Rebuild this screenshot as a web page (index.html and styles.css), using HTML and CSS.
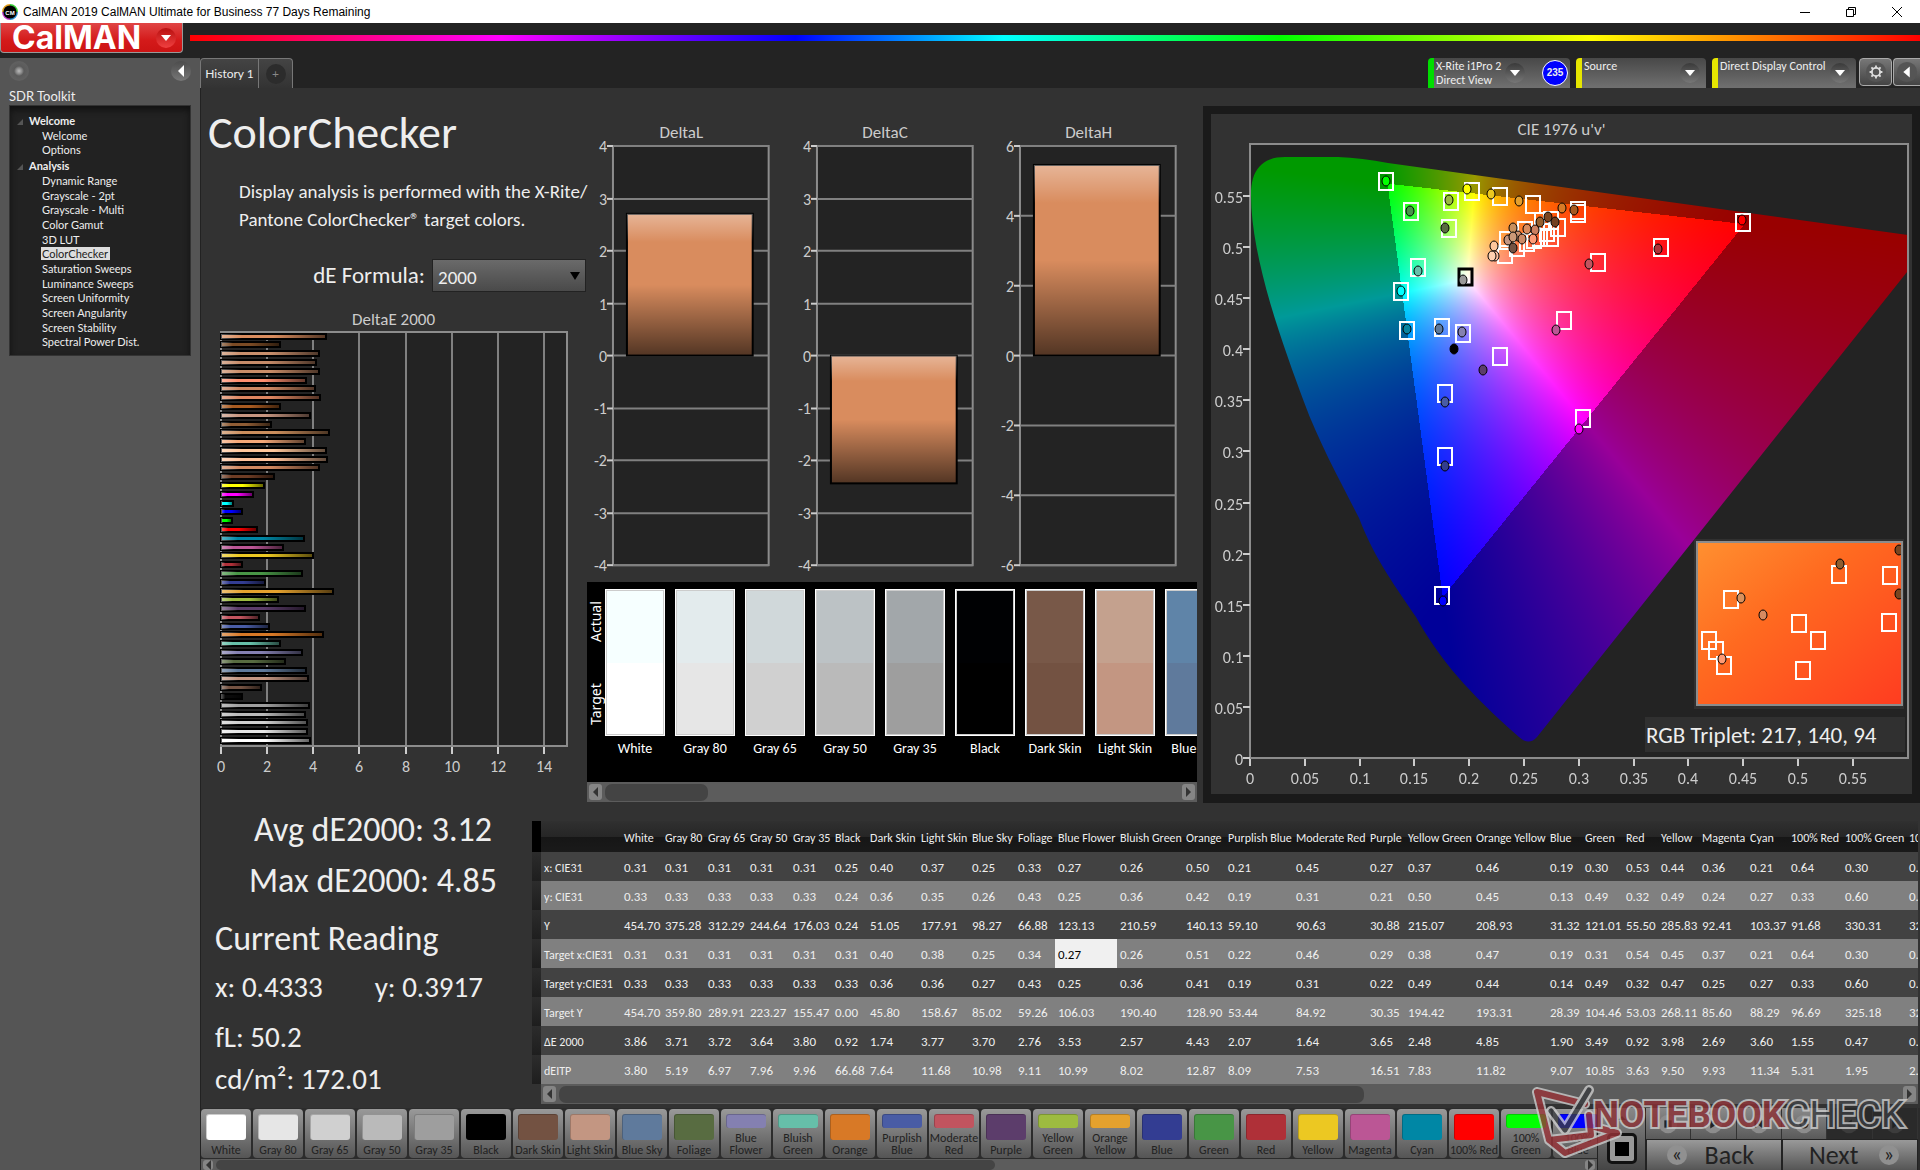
FILE: index.html
```html
<!DOCTYPE html>
<html lang="en">
<head>
<meta charset="utf-8">
<title>CalMAN 2019 CalMAN Ultimate for Business</title>
<link rel="stylesheet" href="styles.css">
</head>
<body>
<div class="titlebar">
  <svg class="app-icon" viewBox="0 0 16 16" aria-hidden="true">
    <path d="M8 1A7 7 0 0 1 15 8" stroke="#3ad03a"/><path d="M15 8A7 7 0 0 1 8 15" stroke="#2a8fd0"/><path d="M8 15A7 7 0 0 1 1 8" stroke="#c03ac8"/><path d="M1 8A7 7 0 0 1 8 1" stroke="#e0a020"/>
    <circle cx="8" cy="8" r="6.6" fill="#000"/><text x="8" y="11" text-anchor="middle">CM</text>
  </svg>
  <span class="title-text">CalMAN 2019 CalMAN Ultimate for Business 77 Days Remaining</span>
  <div class="window-buttons">
    <button type="button" aria-label="Minimize"><svg viewBox="0 0 12 12"><path d="M1 6.500H11"/></svg></button>
    <button type="button" aria-label="Restore"><svg viewBox="0 0 12 12"><path d="M1.500 3.500H8.500V10.500H1.500ZM3.500 3.500V1.500H10.500V8.500H8.500"/></svg></button>
    <button type="button" aria-label="Close"><svg viewBox="0 0 12 12"><path d="M1 1L11 11M11 1L1 11"/></svg></button>
  </div>
</div>

<header class="header">
  <button class="logo" type="button"><span>CalMAN</span><i class="round"><i class="arrow-down"></i></i></button>
  <div class="rainbow"></div>
</header>

<div class="workspace">
  <aside class="sidebar">
    <div class="sidebar-top"><button type="button" class="knob" aria-label="Pin"></button><button type="button" class="knob back" aria-label="Collapse"></button></div>
    <h2>SDR Toolkit</h2>
    <nav class="tree">
      <h3>Welcome</h3>
      <ul><li><a href="#">Welcome</a></li><li><a href="#">Options</a></li></ul>
      <h3>Analysis</h3>
      <ul>
        <li><a href="#">Dynamic Range</a></li><li><a href="#">Grayscale - 2pt</a></li><li><a href="#">Grayscale - Multi</a></li>
        <li><a href="#">Color Gamut</a></li><li><a href="#">3D LUT</a></li><li><a href="#" class="current">ColorChecker</a></li>
        <li><a href="#">Saturation Sweeps</a></li><li><a href="#">Luminance Sweeps</a></li><li><a href="#">Screen Uniformity</a></li>
        <li><a href="#">Screen Angularity</a></li><li><a href="#">Screen Stability</a></li><li><a href="#">Spectral Power Dist.</a></li>
      </ul>
    </nav>
  </aside>

  <div class="content">
    <div class="tabbar">
      <div class="tabs"><button type="button" class="tab">History 1</button><button type="button" class="tab add" aria-label="New tab"><span>+</span></button></div>
      <div class="devices">
        <button type="button" class="device meter"><span>X-Rite i1Pro 2<br>Direct View</span><i class="round"><i class="arrow-down"></i></i><b>235</b></button>
        <button type="button" class="device source"><span>Source</span><i class="round"><i class="arrow-down"></i></i></button>
        <button type="button" class="device display"><span>Direct Display Control</span><i class="round"><i class="arrow-down"></i></i></button>
        <button type="button" class="square" aria-label="Settings"><svg viewBox="0 0 24 24"><circle class="disc" cx="12" cy="12" r="11"/><circle cx="12" cy="12" r="4.500"/><path d="M12 5V8M12 16V19M5 12H8M16 12H19M7 7L9 9M15 15L17 17M17 7L15 9M7 17L9 15"/></svg></button>
        <button type="button" class="square last" aria-label="Hide panel"><svg viewBox="0 0 24 24"><circle class="disc" cx="12" cy="12" r="11"/><path class="solid" d="M15 6V18L8 12Z"/></svg></button>
      </div>
    </div>

    <main class="main">
      <div class="upper">
        <section class="intro">
          <h1>ColorChecker</h1>
          <p>Display analysis is performed with the X-Rite/<br>Pantone ColorChecker® target colors.</p>
          <div class="formula"><label for="formula">dE Formula:</label><select id="formula"><option>2000</option></select></div>
          <h2 class="chart-title">DeltaE 2000</h2>
          <svg id="deltae" class="chart" viewBox="200 328 387 454"></svg>
        </section>

        <section class="middle">
          <div class="deltas">
            <div><h2 class="chart-title">DeltaL</h2><svg class="chart delta" data-max="4" data-step="1" data-value="2.700" viewBox="0 138 177 436"></svg></div>
            <div><h2 class="chart-title">DeltaC</h2><svg class="chart delta" data-max="4" data-step="1" data-value="-2.430" viewBox="0 138 177 436"></svg></div>
            <div><h2 class="chart-title">DeltaH</h2><svg class="chart delta" data-max="6" data-step="2" data-value="5.450" viewBox="0 138 177 436"></svg></div>
          </div>
          <div class="compare">
            <div class="compare-axis"><span>Actual</span><span>Target</span></div>
            <div class="pairs" id="pairs"></div>
          </div>
          <div class="scroll"><button type="button" class="left" aria-label="Scroll left"></button><div class="track"><div class="thumb short"></div></div><button type="button" class="right" aria-label="Scroll right"></button></div>
        </section>

        <section class="cie">
          <h2 class="chart-title">CIE 1976 u'v'</h2>
          <div class="cie-plot">
            <canvas id="gamut" width="701" height="650"></canvas>
            <svg id="cie" class="chart" viewBox="1211 140 701 650"></svg>
          </div>
        </section>
      </div>

      <div class="lower">
        <section class="readings">
          <p class="stat">Avg dE2000: 3.12</p>
          <p class="stat">Max dE2000: 4.85</p>
          <h2>Current Reading</h2>
          <p class="pair"><span>x: 0.4333</span><span>y: 0.3917</span></p>
          <p class="fl">fL: 50.2</p>
          <p class="cd">cd/m²: 172.01</p>
        </section>
        <section class="results">
          <div class="table-wrap"><table id="table"></table></div>
          <div class="scroll under"><button type="button" class="left" aria-label="Scroll left"></button><div class="track"><div class="thumb long"></div></div><button type="button" class="right" aria-label="Scroll right"></button></div>
        </section>
      </div>
    </main>

    <footer class="footer">
      <div class="patches">
        <div class="patch-row" id="patches"></div>
        <div class="scroll thin"><button type="button" class="left" aria-label="Scroll left"></button><div class="track"><div class="thumb patch-thumb"></div></div><button type="button" class="right" aria-label="Scroll right"></button></div>
      </div>
      <div class="window-toggle"><i class="arrow-up"></i><button type="button" aria-label="Pattern window"><i></i></button></div>
      <div class="controls">
        <div class="transport">
          <button type="button" aria-label="Stop"><svg viewBox="0 0 24 24"><circle cx="12" cy="12" r="10"/><path d="M8 8H16V16H8Z"/></svg></button>
          <button type="button" aria-label="Play"><svg viewBox="0 0 24 24"><circle cx="12" cy="12" r="10"/><path d="M9 7L17 12L9 17Z"/></svg></button>
          <button type="button" aria-label="Read series"><svg viewBox="0 0 24 24"><circle cx="12" cy="12" r="10"/><path d="M7 8H9V16H7ZM10 12L15 8V16ZM15 8H17V16H15Z"/></svg></button>
          <button type="button" aria-label="Repeat"><svg viewBox="0 0 24 24"><circle cx="12" cy="12" r="10"/><path d="M12 7A5 5 0 1 0 17 12H15A3 3 0 1 1 12 9V11L16 8L12 5Z"/></svg></button>
          <button type="button" aria-label="Previous" disabled><svg viewBox="0 0 24 24"><circle cx="12" cy="12" r="10"/><path d="M15 7L8 12L15 17Z"/></svg></button>
          <button type="button" aria-label="Skip" disabled><svg viewBox="0 0 24 24"><circle cx="12" cy="12" r="10"/><path d="M9 7L16 12L9 17Z"/></svg></button>
        </div>
        <div class="steps"><button type="button"><i>«</i><span>Back</span></button><button type="button"><span>Next</span><i>»</i></button></div>
      </div>
      <svg class="watermark" viewBox="0 0 390 78" role="img" aria-label="Notebookcheck">
        <g fill="none" stroke-linejoin="round" stroke-linecap="round">
          <path class="halo" d="M8 7L56 19M8 7L20 55L62 50L60 30M20 55L36 68L88 48L66 42"/>
          <path class="brand" d="M8 7L56 19M8 7L20 55L62 50L60 30M20 55L36 68L88 48L66 42"/>
          <path class="halo" d="M22 26L36 45L60 5"/><path class="tick" d="M22 26L36 45L60 5"/>
        </g>
        <text x="64" y="42"><tspan class="w-red">NOTEBOOK</tspan><tspan class="w-grey">CHECK</tspan></text>
      </svg>
    </footer>
  </div>
</div>
<script src="app.js"></script>
</body>
</html>
```
FILE: styles.css
```css
:root {
  --ui: Carlito, "Liberation Sans Narrow", "Roboto Condensed", Lato, sans-serif;
  --panel: #323232;
  --plot: #232323;
}
* { box-sizing: border-box; }
body { margin: 0; min-height: 100vh; background: #232323; color: #eee; font-family: var(--ui); font-size: 12px; display: flex; flex-direction: column; overflow-x: hidden; }
h1, h2, h3, p, ul { margin: 0; padding: 0; font-weight: 400; }
ul { list-style: none; }
button, select { font-family: inherit; color: inherit; border: 0; padding: 0; margin: 0; background: none; }
i { font-style: normal; }

.titlebar { height: 23px; background: #fff; color: #000; display: flex; align-items: center; padding-left: 2px; gap: 5px; }
.app-icon { width: 16px; height: 16px; fill: none; stroke-width: 2; }
.app-icon text { fill: #fff; font: bold 6px "Liberation Sans", sans-serif; }
.title-text { flex: 1; font: 12px "Liberation Sans", sans-serif; }
.window-buttons { display: flex; }
.window-buttons button { width: 46px; height: 20px; display: grid; place-items: center; }
.window-buttons svg { width: 12px; height: 12px; fill: none; stroke: #000; }

.header { height: 35px; display: flex; align-items: flex-start; gap: 7px; }
.logo { width: 183px; height: 30px; padding: 0 6px 0 11px; display: flex; align-items: center; justify-content: space-between; background: linear-gradient(#e04545, #d41a1a 60%, #cc1414); border: 1px solid #999; border-top: 0; border-radius: 0 0 4px 4px; color: #fff; font: bold 32px/28px Inter, sans-serif; }
.round { width: 20px; height: 20px; border-radius: 50%; display: grid; place-items: center; background: linear-gradient(#3a3a3a, #777); }
.logo .round { background: linear-gradient(#b81010, #f04040); }
.arrow-down { border: 5px solid transparent; border-top: 6px solid #fff; border-bottom: 0; }
.rainbow { flex: 1; height: 6px; margin-top: 12px; background: linear-gradient(90deg, #f00, #f0f 18%, #00f 35%, #0ff 47%, #0f0 63%, #ff0 81%, #f00); }

.workspace { flex: 1; display: flex; }
.sidebar { width: 200px; background: #555; padding: 3px 9px; }
.sidebar-top { display: flex; justify-content: space-between; }
.knob { width: 20px; height: 20px; border-radius: 50%; background: radial-gradient(circle, #bbb 0, #888 3px, #5a5a5a 5px, #606060 9px); }
.knob.back { background: linear-gradient(#4c4c4c, #777); display: grid; place-items: center; }
.knob.back::after { content: ""; border: 6px solid transparent; border-right-color: #fff; border-left: 0; }
.sidebar h2 { font: 13px/16px Lato, sans-serif; margin-top: 7px; }
.tree { margin-top: 1px; height: 251px; background: #222; border: 1px solid #333; box-shadow: inset 0 4px 6px #111; padding: 6px 0 0 19px; font: 11px/15px Lato, sans-serif; }
.tree h3 { position: relative; font-size: 11px; font-weight: 700; line-height: 15px; margin: 1px 0; }
.tree h3::before { content: ""; position: absolute; left: -12px; top: 6px; border: 3px solid transparent; border-right-color: #555; border-bottom-color: #555; }
.tree ul { display: grid; grid-auto-rows: 1fr; padding-left: 12px; height: 28px; }
.tree h3 + ul:last-child { height: 176px; }
.tree li { line-height: 14px; }
.tree a { color: inherit; text-decoration: none; padding: 0 2px 0 1px; }
.tree .current { background: #ddd; color: #222; }

.content { flex: 1; min-width: 0; display: flex; flex-direction: column; }
.tabbar { height: 30px; display: flex; justify-content: space-between; background: #232323; }
.tabs { display: flex; border: 1px solid #777; border-bottom: 0; border-radius: 4px 4px 0 0; background: linear-gradient(#444, #333); }
.tab { width: 57px; font: 12px Lato, sans-serif; }
.tab.add { width: 34px; border-left: 1px solid #777; }
.tab.add span { display: inline-block; width: 20px; line-height: 20px; border-radius: 50%; background: #2c2c2c; color: #888; }
.devices { display: flex; align-items: flex-start; }
.device { position: relative; height: 30px; display: flex; align-items: center; border-radius: 4px 4px 0 0; background: linear-gradient(#484848, #707070); border-left: 6px solid #e6e600; text-align: left; padding-right: 6px; margin-right: 6px; }
.device > span { flex: 1; align-self: flex-start; padding: 1px 0 0 2px; font: 12px/14px var(--ui); white-space: nowrap; }
.meter { width: 142px; border-left-color: #0d0; padding-right: 2px; }
.meter b { width: 26px; height: 26px; border-radius: 50%; background: #00f; border: 1px solid #fff; margin-left: 17px; font: bold 10px/24px "Liberation Sans", sans-serif; text-align: center; }
.source { width: 130px; }
.display { width: 144px; margin-right: 3px; }
.square { width: 33px; height: 28px; margin-right: 1px; border: 1px solid #aaa; border-radius: 4px; background: linear-gradient(#777, #444); display: grid; place-items: center; }
.square.last { width: 27px; margin: 0; border-right: 0; border-radius: 4px 0 0 4px; }
.square svg { width: 22px; height: 22px; fill: none; stroke: #ddd; stroke-width: 2; }
.square .disc { fill: #555; stroke: none; }
.square .solid { fill: #fff; stroke: none; }

.main { flex: 1; background: var(--panel); border-left: 1px solid #222; }
.upper { display: grid; grid-template-columns: minmax(0, 387fr) minmax(0, 616fr) minmax(0, 717fr); height: 716px; margin-left: -1px; }
.chart { display: block; width: 100%; overflow: visible; }
.chart-title { font-size: 17px; line-height: 20px; text-align: center; color: #ccc; }
.chart text { font-size: 16px; fill: #ccc; }
.frame { fill: var(--plot); stroke: #8c8c8c; stroke-width: 2; }
.grid { stroke: #808080; stroke-width: 2; }
.tickline { stroke: #ccc; stroke-width: 2; }
.mid { text-anchor: middle; }
.end { text-anchor: end; }
.outline { stroke: #000; stroke-width: 2; }

.intro h1 { font-size: 46px; line-height: 48px; padding: 20px 0 0 8px; white-space: nowrap; }
.intro p { font-size: 19px; line-height: 28px; margin: 22px 0 0 39px; white-space: nowrap; }
.intro .chart-title { line-height: 16px; }
.formula { position: relative; display: flex; justify-content: flex-end; align-items: center; gap: 7px; margin: 25px 1px 20px 0; height: 33px; }
.formula label { font-size: 23px; line-height: 33px; }
.formula select { appearance: none; width: 154px; height: 33px; padding: 4px 4px 0 5px; font-size: 19px; border: 1px solid #222; background: linear-gradient(#6a6a6a, #4a4a4a); }
.formula::after { content: ""; position: absolute; right: 6px; top: 13px; border: 5px solid transparent; border-top: 8px solid #000; border-bottom: 0; }

.middle { padding: 35px 6px 0 0; }
.deltas { display: grid; grid-template-columns: repeat(3, minmax(0, 1fr)); gap: 27px; padding: 0 20px 0 6px; }
.deltas .chart { margin-top: -4px; }
.compare { height: 200px; margin-top: 8px; background: #000; display: flex; overflow: hidden; color: #fff; }
.compare-axis { width: 17px; flex: none; display: flex; flex-direction: column; padding: 10px 0 0; }
.compare-axis span { height: 60px; margin-bottom: 22px; writing-mode: vertical-rl; transform: rotate(180deg); text-align: center; font: 14px/17px "Noto Sans", sans-serif; }
.pairs { display: flex; gap: 10px; padding: 7px 0 0 1px; }
.pairs div { width: 60px; text-align: center; font-size: 14px; line-height: 26px; white-space: nowrap; }
.pairs i { display: block; height: 147px; border: 2px solid #ccc; outline: 1px solid #fff; outline-offset: -1px; }
.scroll { height: 20px; display: flex; align-items: center; background: #5c5c5c; padding: 0 2px; gap: 3px; }
.scroll button { width: 13px; height: 16px; border-radius: 3px; background: #858585; display: grid; place-items: center; }
.scroll button::after { content: ""; border: 5px solid transparent; }
.scroll .left::after { border-right-color: #333; border-left: 0; }
.scroll .right::after { border-left-color: #333; border-right: 0; }
.track { flex: 1; height: 17px; }
.thumb { height: 100%; border-radius: 7px; background: #444; }
.short { width: 18%; }
.long { width: 60%; }
.patch-thumb { width: 57%; }
.thin { height: 11px; }
.thin button { height: 10px; width: 10px; }
.thin .track { height: 10px; }

.cie { margin: 18px 0 0; border: 8px solid #1a1a1a; border-bottom-width: 9px; height: 697px; padding-top: 6px; }
.cie-plot { position: relative; }
.cie-plot canvas { position: absolute; left: 0; top: 0; width: 100%; height: 100%; }
.cie-plot svg { position: relative; }
.cie-frame { fill: none; stroke: #8c8c8c; stroke-width: 2; }
.target { fill: none; stroke: #fff; stroke-width: 2; }
.white-target { stroke: #000; stroke-width: 3; }
.chart .triplet { font-size: 23px; fill: #eee; }

.lower { display: flex; margin-right: 2px; }
.readings { width: 331px; flex: none; padding-left: 14px; white-space: nowrap; }
.readings .stat { font-size: 34px; line-height: 51px; width: 316px; text-align: center; }
.readings h2 { font-size: 34px; line-height: 66px; }
.readings p { font-size: 29px; line-height: 30px; }
.pair { display: flex; gap: 52px; }
.readings .fl { margin-top: 20px; }
.readings .cd { margin-top: 12px; }
.results { flex: 1; min-width: 0; padding-top: 17px; }
.table-wrap { overflow: hidden; }
table { border-collapse: collapse; table-layout: fixed; font-size: 13px; }
thead tr { height: 31px; background: linear-gradient(#303030, #262626 50%, #161616 52%, #1a1a1a); }
tbody tr { height: 29px; background: #424242; }
tbody tr:nth-child(even) { background: #808080; }
th, td { padding: 2px 0 0 3px; text-align: left; font-weight: 400; white-space: nowrap; }
th { font-size: 12px; }
th:first-child { background: linear-gradient(#2c2c2c, #1e1e1e); }
thead th:first-child { background: #000; }
td.selected { background: #f0f0f0; color: #000; }
.under { margin-left: 9px; margin-bottom: 4px; }

.footer { height: 63px; position: relative; display: flex; background: #2c2c2c; border-left: 1px solid #222; }
.patches { width: 1396px; flex: 0 1 auto; min-width: 0; background: #5c5c5c; }
.patch-row { display: flex; gap: 2px; height: 51px; padding-top: 1px; overflow: hidden; background: #2c2c2c; }
.patch { flex: none; width: 50px; height: 49px; border-radius: 4px; background: linear-gradient(#999, #555); padding: 5px 0 2px; display: flex; flex-direction: column; align-items: center; gap: 4px; color: #222; font: 12px/12px var(--ui); }
.patch i { flex: 1; width: 40px; border-radius: 3px; border: 1px solid #0003; border-right: 0; border-bottom: 0; }
.patch span { white-space: nowrap; }
.window-toggle { width: 49px; flex: none; display: flex; flex-direction: column; align-items: center; gap: 13px; padding-top: 8px; background: linear-gradient(#888, #444); border: solid #222; border-width: 0 1px; }
.arrow-up { border: 4px solid transparent; border-bottom-color: #222; border-top: 0; }
.window-toggle button { width: 30px; height: 31px; border: 3px solid #111; border-radius: 5px; background: #999; display: grid; place-items: center; }
.window-toggle button i { width: 14px; height: 14px; background: #000; }
.controls { flex: 1; padding-right: 2px; }
.transport { display: grid; grid-template-columns: repeat(6, 1fr); height: 31px; }
.transport button { border-right: 1px solid #333; background: linear-gradient(#8a8a8a, #5a5a5a); display: grid; place-items: center; }
.transport button:disabled { background: #2a2a2a; }
.transport svg { width: 22px; fill: #222; }
.transport circle { fill: #8c8c8c; }
.transport button:disabled circle { fill: #3c3c3c; }
.steps { display: grid; grid-template-columns: 1fr 1fr; height: 32px; }
.steps button { display: flex; align-items: center; justify-content: space-between; padding: 0 18px 0 20px; border: 1px solid #222; background: linear-gradient(#999, #555); color: #222; font-size: 26px; line-height: 28px; }
.steps button:first-child { padding-right: 27px; }
.steps button:last-child { padding-left: 26px; }
.steps i { width: 20px; height: 20px; border-radius: 50%; background: #909090; font: 20px/17px Lato, sans-serif; text-align: center; }
.watermark { position: absolute; right: 1px; bottom: 8px; width: 390px; height: 78px; opacity: .8; }
.halo { stroke: #ccc; stroke-width: 10; }
.brand { stroke: #993338; stroke-width: 6; }
.tick { stroke: #3a3c40; stroke-width: 5; }
.watermark text { font: 37px Roboto, sans-serif; paint-order: stroke; stroke: #ccc; stroke-width: 4px; }
.w-red { fill: #8c3035; font-weight: 700; }
.w-grey { fill: #3a3c40; }
```
FILE: app.js
```js
const PATCHES = [
  ['White', '#fff', '#f6ffff'], ['Gray 80', '#e6e6e6', '#e3ebed'], ['Gray 65', '#d0d0d0', '#d0d8da'], ['Gray 50', '#bababa', '#bcc2c5'],
  ['Gray 35', '#9e9e9e', '#a2a7aa'], ['Black', '#000', '#000103'], ['Dark Skin', '#735242', '#785848'], ['Light Skin', '#c39682', '#c4a18e'],
  ['Blue Sky', '#5f7a9c', '#5f84a8'], ['Foliage', '#586c41'], ['Blue Flower', '#8480b1'], ['Bluish Green', '#66bfa9'], ['Orange', '#d87926'],
  ['Purplish Blue', '#495ca5'], ['Moderate Red', '#c1545f'], ['Purple', '#5c3d6b'], ['Yellow Green', '#9dbb40'], ['Orange Yellow', '#e4a12e'],
  ['Blue', '#333d92'], ['Green', '#489546'], ['Red', '#af3038'], ['Yellow', '#ecc822'], ['Magenta', '#bb5695'], ['Cyan', '#0087a5'],
  ['100% Red', '#f00'], ['100% Green', '#0f0'], ['100% Blue', '#00f']
];

/* DeltaE bars, top to bottom */
const BARS = [
  [4.54, '#d98c5e'], [2.55, '#7a4a24'], [4.24, '#c98f6c'], [4.11, '#c48a68'], [4.24, '#c98c68'], [3.67, '#ff8f70'], [4.06, '#cf8863'], [4.28, '#dc8560'],
  [2.55, '#a85a20'], [3.85, '#c79680'], [2.15, '#8f5c34'], [4.67, '#c98d5c'], [3.63, '#f5a878'], [4.54, '#ffc79c'], [4.58, '#ffc29a'], [4.24, '#d08860'],
  [2.28, '#6e3c24'], [1.85, '#ff0'], [1.37, '#f0f'], [0.5, '#0ff'], [0.9, '#00f'], [0.47, '#0f0'], [1.55, '#f00'], [3.6, '#0087a5'], [2.69, '#bb5695'],
  [3.98, '#ecc822'], [0.92, '#af3038'], [3.49, '#489546'], [1.9, '#333d92'], [4.85, '#e4a12e'], [2.48, '#9dbb40'], [3.65, '#5c3d6b'], [1.64, '#c1545f'],
  [2.07, '#495ca5'], [4.43, '#d87926'], [2.57, '#66bfa9'], [3.53, '#8480b1'], [2.76, '#586c41'], [3.7, '#5f7a9c'], [3.77, '#c39682'], [1.74, '#735242'],
  [0.92, '#0a0a0a'], [3.8, '#9e9e9e'], [3.64, '#bababa'], [3.72, '#d0d0d0'], [3.71, '#e6e6e6'], [3.86, '#fff']
];

const shade = (id, x2, y2) => `<defs><linearGradient id="${id}" x1="0" y1="0" x2="${x2}" y2="${y2}">
  <stop offset="0" stop-color="#fff" stop-opacity=".36"/><stop offset=".2" stop-color="#fff" stop-opacity="0"/>
  <stop offset=".5" stop-color="#000" stop-opacity="0"/><stop offset="1" stop-color="#000" stop-opacity=".62"/></linearGradient></defs>`;
const line = (x1, y1, x2, y2, cls) => `<line class="${cls}" x1="${x1}" y1="${y1}" x2="${x2}" y2="${y2}"/>`;
const label = (x, y, s, cls) => `<text class="${cls}" x="${x}" y="${y}">${s}</text>`;

function drawDeltaE() {
  let s = shade('across', 1, 0) + '<rect class="frame" x="221" y="332" width="346" height="414"/>';
  for (let v = 0; v <= 14; v += 2) {
    const x = Math.round(221 + v * 23.07);
    if (v) s += line(x, 333, x, 745, 'grid');
    s += line(x, 747, x, 754, 'tickline') + label(x, 772, v, 'mid');
  }
  BARS.forEach(([v, c], i) => {
    const y = Math.round(333.6 + i * 8.79), w = Math.round(v * 23.07);
    const box = `x="221" y="${y}" width="${w}" height="5"`;
    s += `<rect class="outline" ${box} fill="${c}"/><rect ${box} fill="url(#across)"/>`;
  });
  document.getElementById('deltae').innerHTML = s;
}

function drawDelta(svg, n) {
  const max = +svg.dataset.max, step = +svg.dataset.step, value = +svg.dataset.value;
  const y = v => Math.round(355 - v * 210 / max);
  let s = shade('down' + n, 0, 1) + '<rect class="frame" x="20" y="145" width="156" height="420"/>';
  for (let v = -max; v <= max; v += step) {
    s += line(20, y(v), 176, y(v), 'grid') + line(14, y(v), 20, y(v), 'tickline') + label(14, y(v) + 6, v, 'end');
  }
  const top = y(Math.max(value, 0)), h = y(Math.min(value, 0)) - top;
  const box = `x="34" y="${top}" width="126" height="${h}"`;
  s += `<rect class="outline" ${box} fill="#d98c5e"/><rect ${box} fill="url(#down${n})"/>`;
  svg.innerHTML = s;
}

/* Chromaticity diagram: pixel coordinates, origin of the axes at (1250, 758) */
const TARGETS = [[1386, 181], [1472, 191], [1500, 196], [1451, 201], [1533, 204], [1411, 211], [1578, 210], [1578, 213], [1449, 228], [1743, 222],
  [1542, 221], [1551, 220], [1558, 227], [1551, 237], [1525, 230], [1507, 240], [1505, 254], [1517, 247], [1540, 237], [1547, 232], [1534, 239], [1527, 242],
  [1661, 247], [1598, 262], [1418, 267], [1401, 291], [1564, 320], [1407, 330], [1442, 327], [1463, 333], [1500, 356], [1445, 393], [1583, 418], [1445, 456], [1442, 595]];
const DOTS = [[1386, 181, '#0f0'], [1467, 189, '#ff0'], [1491, 194, '#ecc820'], [1449, 200, '#9cba3f'], [1519, 201, '#e4a02e'], [1410, 211, '#489549'],
  [1562, 208, '#d87a26'], [1574, 210, '#a85a20'], [1445, 228, '#586c41'], [1548, 217, '#7a4520'], [1540, 222, '#96602f'], [1555, 222, '#734020'],
  [1513, 228, '#c9905c'], [1535, 230, '#cc8060'], [1527, 229, '#d98c5e'], [1508, 240, '#c49682'], [1513, 248, '#735242'], [1518, 236, '#c98f6c'], [1513, 237, '#cc9977'],
  [1522, 239, '#cc8a66'], [1533, 239, '#ff9c78'], [1494, 246, '#ffc79c'], [1495, 256, '#ffc0a0'], [1492, 256, '#ffd0b0'], [1742, 220, '#f00'],
  [1658, 249, '#af3239'], [1589, 264, '#c1545f'], [1418, 271, '#67bfaa'], [1463, 280, '#999'], [1401, 291, '#0ff'], [1407, 329, '#0885a1'],
  [1439, 329, '#5f7a9c'], [1462, 332, '#8580b0'], [1454, 349, '#000'], [1483, 370, '#5c3d6b'], [1556, 330, '#bb5695'], [1445, 402, '#485ba4'],
  [1579, 429, '#f0f'], [1445, 466, '#333d8e'], [1443, 601, '#00f']];
const INSET_TARGETS = [[1839, 574], [1890, 575], [1731, 599], [1799, 623], [1818, 640], [1889, 622], [1709, 640], [1716, 650], [1724, 665], [1803, 670]];
const INSET_DOTS = [[1840, 564, '#8f5e30'], [1899, 550, '#7a4520'], [1899, 594, '#7a4520'], [1741, 598, '#d9915c'], [1763, 615, '#d68a60'], [1722, 659, '#ff9a74']];

const square = ([x, y]) => `<rect class="target" x="${x - 7}" y="${y - 8}" width="14" height="17"/>`;
const dot = ([x, y, c]) => `<ellipse cx="${x}" cy="${y}" rx="4" ry="5" fill="${c}" stroke="#000"/>`;

function drawCie() {
  let s = `<defs><linearGradient id="warm" x1="0" y1="0" x2="1" y2="1"><stop offset="0" stop-color="#ff9030"/>
    <stop offset=".4" stop-color="#ff6a20"/><stop offset="1" stop-color="#ff3c20"/></linearGradient>
    <clipPath id="inset"><rect x="1698" y="543" width="203" height="162"/></clipPath></defs>`;
  s += '<rect class="cie-frame" x="1250" y="144" width="658" height="614"/>';
  for (let i = 0; i <= 11; i++) {
    const v = +(i * 0.05).toFixed(2), x = Math.round(1250 + v * 1096), y = Math.round(758 - v * 1022);
    s += line(x, 759, x, 766, 'tickline') + label(x, 784, v, 'mid');
    s += line(1243, y, 1250, y, 'tickline') + label(1243, y + 7, v, 'end');
  }
  s += TARGETS.map(square).join('') + '<rect class="target white-target" x="1459" y="269" width="13" height="16"/>' + DOTS.map(dot).join('');
  s += '<rect x="1694" y="539" width="210" height="170" fill="#303030"/><rect x="1697" y="542" width="205" height="164" fill="url(#warm)"/>';
  s += '<g clip-path="url(#inset)">' + INSET_TARGETS.map(square).join('') + INSET_DOTS.map(dot).join('') + '</g>';
  s += '<rect class="cie-frame" x="1697" y="542" width="205" height="163"/>';
  s += '<rect x="1645" y="717" width="260" height="35" fill="#303030"/>' + label(1646, 743, 'RGB Triplet: 217, 140, 94', 'triplet');
  document.getElementById('cie').innerHTML = s;
}

function drawGamut() {
  const ctx = document.getElementById('gamut').getContext('2d'), W = 701, H = 650;
  const image = ctx.createImageData(W, H);
  for (let py = 0; py < H; py++) for (let px = 0; px < W; px++) {
    const u = (px - 39) / 1096, v = (618 - py) / 1022;
    if (v <= 0.002) continue;
    const X = 9 * u / (4 * v), Z = (12 - 3 * u - 20 * v) / (4 * v);
    const rgb = [3.2406 * X - 1.5372 - 0.4986 * Z, -0.9689 * X + 1.8758 + 0.0415 * Z, 0.0557 * X - 0.2040 + 1.0570 * Z];
    const level = Math.min(...rgb) < 0 ? 153 : 255, top = Math.max(...rgb), at = (py * W + px) * 4;
    rgb.forEach((c, k) => { image.data[at + k] = level * Math.max(c, 0) / top; });
    image.data[at + 3] = 255;
  }
  const full = document.createElement('canvas');
  full.width = W; full.height = H;
  full.getContext('2d').putImageData(image, 0, 0);
  ctx.fillStyle = '#232323';
  ctx.fillRect(39, 4, 658, 614);
  ctx.beginPath(); ctx.rect(39, 4, 658, 614); ctx.clip();
  ctx.translate(-1211, -140);
  ctx.beginPath();
  ctx.moveTo(1251, 195);
  ctx.bezierCurveTo(1251, 170, 1262, 157, 1285, 157);
  ctx.lineTo(1338, 157);
  ctx.quadraticCurveTo(1362, 158, 1388, 163);
  ctx.lineTo(1930, 238); ctx.lineTo(1930, 243); ctx.lineTo(1537, 737);
  ctx.quadraticCurveTo(1529, 746, 1519, 737);
  ctx.bezierCurveTo(1468, 692, 1440, 660, 1416, 617);
  ctx.bezierCurveTo(1398, 590, 1375, 560, 1359, 518);
  ctx.bezierCurveTo(1337, 475, 1318, 440, 1304, 402);
  ctx.bezierCurveTo(1285, 350, 1251, 260, 1251, 195);
  ctx.clip();
  ctx.drawImage(full, 1211, 140);
}

const WIDTHS = [9, 80, 41, 43, 42, 43, 42, 35, 51, 51, 46, 40, 62, 66, 42, 68, 74, 38, 68, 74, 35, 41, 35, 41, 48, 41, 54, 64, 60];
const ROWS = `x: CIE31|0.31 0.31 0.31 0.31 0.31 0.25 0.40 0.37 0.25 0.33 0.27 0.26 0.50 0.21 0.45 0.27 0.37 0.46 0.19 0.30 0.53 0.44 0.36 0.21 0.64 0.30 0.15
y: CIE31|0.33 0.33 0.33 0.33 0.33 0.24 0.36 0.35 0.26 0.43 0.25 0.36 0.42 0.19 0.31 0.21 0.50 0.45 0.13 0.49 0.32 0.49 0.24 0.27 0.33 0.60 0.06
Y|454.70 375.28 312.29 244.64 176.03 0.24 51.05 177.91 98.27 66.88 123.13 210.59 140.13 59.10 90.63 30.88 215.07 208.93 31.32 121.01 55.50 285.83 92.41 103.37 91.68 330.31 32.90
Target x:CIE31|0.31 0.31 0.31 0.31 0.31 0.31 0.40 0.38 0.25 0.34 0.27 0.26 0.51 0.22 0.46 0.29 0.38 0.47 0.19 0.31 0.54 0.45 0.37 0.21 0.64 0.30 0.15
Target y:CIE31|0.33 0.33 0.33 0.33 0.33 0.33 0.36 0.36 0.27 0.43 0.25 0.36 0.41 0.19 0.31 0.22 0.49 0.44 0.14 0.49 0.32 0.47 0.25 0.27 0.33 0.60 0.06
Target Y|454.70 359.80 289.91 223.27 155.47 0.00 45.80 158.67 85.02 59.26 106.03 190.40 128.90 53.44 84.92 30.35 194.42 193.31 28.39 104.46 53.03 268.11 85.60 88.29 96.69 325.18 32.82
ΔE 2000|3.86 3.71 3.72 3.64 3.80 0.92 1.74 3.77 3.70 2.76 3.53 2.57 4.43 2.07 1.64 3.65 2.48 4.85 1.90 3.49 0.92 3.98 2.69 3.60 1.55 0.47 0.90
dEITP|3.80 5.19 6.97 7.96 9.96 66.68 7.64 11.68 10.98 9.11 10.99 8.02 12.87 8.09 7.53 16.51 7.83 11.82 9.07 10.85 3.63 9.50 9.93 11.34 5.31 1.95 2.10`;

function fillTable() {
  const table = document.getElementById('table');
  table.style.width = WIDTHS.reduce((a, b) => a + b) + 'px';
  const body = ROWS.split('\n').map((row, r) => {
    const [name, values] = row.split('|');
    return `<tr><th></th><th scope="row" class="name">${name}</th>` + values.split(' ').map((v, c) => `<td${r === 3 && c === 10 ? ' class="selected"' : ''}>${v}</td>`).join('') + '</tr>';
  }).join('');
  table.innerHTML = '<colgroup>' + WIDTHS.map(w => `<col style="width:${w}px">`).join('') + '</colgroup><thead><tr><th></th><th></th>' +
    PATCHES.map(p => `<th scope="col">${p[0]}</th>`).join('') + `</tr></thead><tbody>${body}</tbody>`;
}

function fillPatches() {
  document.getElementById('pairs').innerHTML = PATCHES.slice(0, 9).map(([name, target, actual]) =>
    `<div><i style="background:linear-gradient(${actual} 50%,${target} 50%)"></i>${name}</div>`).join('');
  const wrap = ['Blue Flower', 'Bluish Green', 'Purplish Blue', 'Moderate Red', 'Yellow Green', 'Orange Yellow', '100% Green', '100% Blue'];
  document.getElementById('patches').innerHTML = PATCHES.map(([name, color]) =>
    `<button type="button" class="patch"><i style="background-color:${color}"></i><span>${wrap.includes(name) ? name.replace(' ', '<br>') : name}</span></button>`).join('');
}

drawDeltaE();
document.querySelectorAll('.delta').forEach(drawDelta);
drawGamut();
drawCie();
fillTable();
fillPatches();
```
